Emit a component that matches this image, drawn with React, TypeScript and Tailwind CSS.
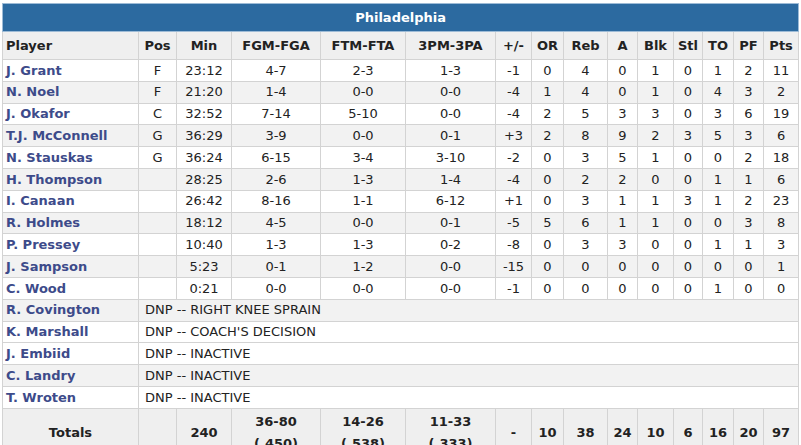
import React from "react";

const cols = [
  { label: "Player", w: 136 },
  { label: "Pos", w: 38 },
  { label: "Min", w: 55 },
  { label: "FGM-FGA", w: 89 },
  { label: "FTM-FTA", w: 85 },
  { label: "3PM-3PA", w: 90 },
  { label: "+/-", w: 36 },
  { label: "OR", w: 32 },
  { label: "Reb", w: 44 },
  { label: "A", w: 30 },
  { label: "Blk", w: 36 },
  { label: "Stl", w: 29 },
  { label: "TO", w: 31 },
  { label: "PF", w: 30 },
  { label: "Pts", w: 35 },
];

const players: string[][] = [
  ["J. Grant", "F", "23:12", "4-7", "2-3", "1-3", "-1", "0", "4", "0", "1", "0", "1", "2", "11"],
  ["N. Noel", "F", "21:20", "1-4", "0-0", "0-0", "-4", "1", "4", "0", "1", "0", "4", "3", "2"],
  ["J. Okafor", "C", "32:52", "7-14", "5-10", "0-0", "-4", "2", "5", "3", "3", "0", "3", "6", "19"],
  ["T.J. McConnell", "G", "36:29", "3-9", "0-0", "0-1", "+3", "2", "8", "9", "2", "3", "5", "3", "6"],
  ["N. Stauskas", "G", "36:24", "6-15", "3-4", "3-10", "-2", "0", "3", "5", "1", "0", "0", "2", "18"],
  ["H. Thompson", "", "28:25", "2-6", "1-3", "1-4", "-4", "0", "2", "2", "0", "0", "1", "1", "6"],
  ["I. Canaan", "", "26:42", "8-16", "1-1", "6-12", "+1", "0", "3", "1", "1", "3", "1", "2", "23"],
  ["R. Holmes", "", "18:12", "4-5", "0-0", "0-1", "-5", "5", "6", "1", "1", "0", "0", "3", "8"],
  ["P. Pressey", "", "10:40", "1-3", "1-3", "0-2", "-8", "0", "3", "3", "0", "0", "1", "1", "3"],
  ["J. Sampson", "", "5:23", "0-1", "1-2", "0-0", "-15", "0", "0", "0", "0", "0", "0", "0", "1"],
  ["C. Wood", "", "0:21", "0-0", "0-0", "0-0", "-1", "0", "0", "0", "0", "0", "1", "0", "0"],
];

const dnp = [
  { name: "R. Covington", note: "DNP -- RIGHT KNEE SPRAIN", gray: true },
  { name: "K. Marshall", note: "DNP -- COACH'S DECISION", gray: false },
  { name: "J. Embiid", note: "DNP -- INACTIVE", gray: false },
  { name: "C. Landry", note: "DNP -- INACTIVE", gray: true },
  { name: "T. Wroten", note: "DNP -- INACTIVE", gray: false },
];

const totals = ["Totals", "", "240", "36-80\n(.450)", "14-26\n(.538)", "11-33\n(.333)", "-", "10", "38", "24", "10", "6", "16", "20", "97"];

const cell = "border border-[#d3d3d3] text-center";
const nameCls = "border border-[#d3d3d3] text-left pl-[3px] font-bold text-[#3d4b8a] whitespace-nowrap";

export default function App() {
  return (
    <div className="w-[801px] h-[445px] overflow-hidden bg-white px-[2px] pt-[3px] font-['DejaVu_Sans',Verdana,sans-serif] text-[13px] text-[#222]">
      <table className="w-[796px] table-fixed border-collapse">
        <colgroup>
          {cols.map((c) => (
            <col key={c.label} style={{ width: c.w }} />
          ))}
        </colgroup>
        <thead>
          <tr className="h-[28px] bg-[#2c6aa0]">
            <th colSpan={15} className="border border-[#9dbbd6] text-white font-bold text-center">
              Philadelphia
            </th>
          </tr>
          <tr className="h-[28px] bg-[#efefef]">
            {cols.map((c, i) => (
              <th key={c.label} className={i === 0 ? "border border-[#d3d3d3] text-left pl-[3px] font-bold" : cell + " font-bold"}>
                {c.label}
              </th>
            ))}
          </tr>
        </thead>
        <tbody>
          {players.map((row, r) => (
            <tr key={row[0]} className={"h-[21.8px] " + (r % 2 === 1 ? "bg-[#f2f2f2]" : "bg-white")}>
              {row.map((v, i) => (
                <td key={i} className={i === 0 ? nameCls : cell}>
                  {v}
                </td>
              ))}
            </tr>
          ))}
          {dnp.map((d) => (
            <tr key={d.name} className={"h-[21.8px] " + (d.gray ? "bg-[#f2f2f2]" : "bg-white")}>
              <td className={nameCls}>{d.name}</td>
              <td colSpan={14} className="border border-[#d3d3d3] text-left pl-[6px]">
                {d.note}
              </td>
            </tr>
          ))}
          <tr className="h-[50px] bg-[#efefef] font-bold">
            {totals.map((v, i) => (
              <td key={i} className={cell + " whitespace-pre-line leading-[22px]"}>
                {v}
              </td>
            ))}
          </tr>
        </tbody>
      </table>
    </div>
  );
}
